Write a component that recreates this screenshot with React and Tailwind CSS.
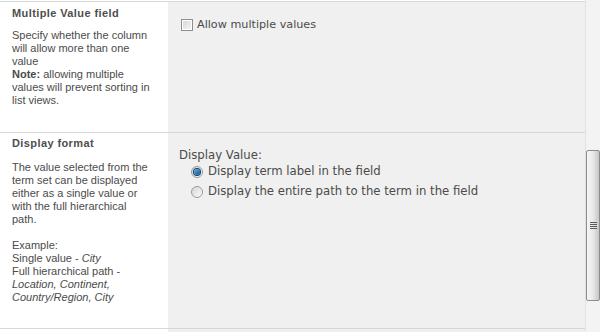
import React from 'react'

const desc = "font-['Liberation_Sans',Arial,sans-serif] text-[11px] leading-[13px] text-[#4b4b4b]"
const body = "font-['DejaVu_Sans',Verdana,sans-serif] text-[#4b4b4b]"

function Checkbox() {
  return (
    <span className="inline-flex h-[12px] w-[12px] shrink-0 items-center justify-center border border-[#8e8e8e] bg-white">
      <span className="h-[8px] w-[8px] bg-gradient-to-br from-[#d9d9d9] to-[#f4f4f4]" />
    </span>
  )
}

function Radio({ checked }) {
  return (
    <span className="inline-flex h-[12px] w-[12px] shrink-0 items-center justify-center rounded-full border border-[#9a9a9a] bg-gradient-to-br from-[#d6d6d6] to-[#fbfbfb]">
      {checked && (
        <span className="h-[6px] w-[6px] rounded-full bg-gradient-to-br from-[#5fb0e8] to-[#10508a] ring-1 ring-[#0d3d6b]" />
      )}
    </span>
  )
}

function Section({ height, title, children, right }) {
  return (
    <div className={`flex border-t border-[#d7d7d7] ${height}`}>
      <div className="w-[168px] shrink-0 bg-white pl-[12px] pr-[6px]">
        <div className="pt-[4px] font-['Liberation_Sans',Arial,sans-serif] text-[11px] font-bold leading-[13px] tracking-[0.4px] text-[#4e4e4e]">
          {title}
        </div>
        <div className={desc}>{children}</div>
      </div>
      <div className="flex-1 bg-[#f0f0f0]">{right}</div>
    </div>
  )
}

export default function App() {
  return (
    <div className="flex h-[332px] w-[600px] overflow-hidden bg-white">
      <div className="w-[585px] shrink-0 pt-px">
        <Section
          height="h-[131px]"
          title={<span className="block pt-[1px]">Multiple Value field</span>}
          right={
            <div className={`flex items-center gap-[4px] pl-[13px] pt-[16px] text-[11.2px] ${body}`}>
              <Checkbox />
              <span className="leading-[13px]">Allow multiple values</span>
            </div>
          }
        >
          <div className="mt-[9px]">
            Specify whether the column
            <br />
            will allow more than one
            <br />
            value
            <br />
            <b>Note:</b> allowing multiple
            <br />
            values will prevent sorting in
            <br />
            list views.
          </div>
        </Section>

        <Section
          height="h-[196px]"
          title="Display format"
          right={
            <div className={`pl-[11px] pt-[15px] text-[11.7px] ${body}`}>
              <div className="leading-[14px]">Display Value:</div>
              <div className="flex h-[20px] items-center gap-[5px] pl-[12px]">
                <Radio checked />
                <span>Display term label in the field</span>
              </div>
              <div className="flex h-[20px] items-center gap-[5px] pl-[12px]">
                <Radio />
                <span>Display the entire path to the term in the field</span>
              </div>
            </div>
          }
        >
          <div className="mt-[11px]">
            The value selected from the
            <br />
            term set can be displayed
            <br />
            either as a single value or
            <br />
            with the full hierarchical
            <br />
            path.
            <br />
            <br />
            Example:
            <br />
            Single value - <i>City</i>
            <br />
            Full hierarchical path -
            <br />
            <i>Location, Continent,</i>
            <br />
            <i>Country/Region, City</i>
          </div>
        </Section>

        <Section height="h-[20px]" title="" right={null} />
      </div>

      <div className="flex w-[15px] shrink-0 flex-col border-l border-[#e2e2e2] bg-[#f3f3f3] pt-[150px]">
        <div className="flex h-[151px] w-[14px] items-center justify-center rounded-[2px] border border-[#8c8c8c] bg-gradient-to-r from-[#f6f6f6] via-[#e9e9e9] to-[#c6c6c6]">
          <div className="flex flex-col gap-[1px]">
            <span className="h-px w-[7px] bg-[#5a5a5a]" />
            <span className="h-px w-[7px] bg-[#5a5a5a]" />
            <span className="h-px w-[7px] bg-[#5a5a5a]" />
            <span className="h-px w-[7px] bg-[#5a5a5a]" />
          </div>
        </div>
      </div>
    </div>
  )
}
